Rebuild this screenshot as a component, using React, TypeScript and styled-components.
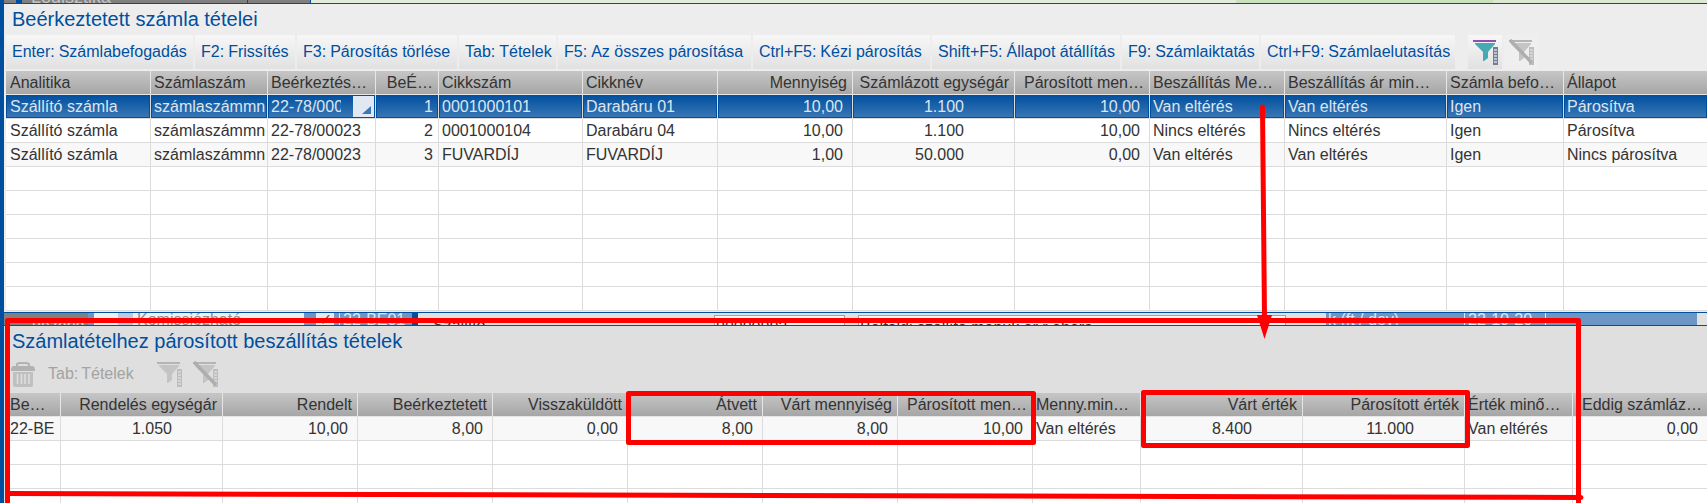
import React from 'react';
import styled, { createGlobalStyle, css } from 'styled-components';

const BLUE = '#004f9f';

const GlobalStyle = createGlobalStyle`
  *, *::before, *::after { box-sizing: border-box; }
  body {
    margin: 0;
    font: 16px/22px "Liberation Sans", Arial, sans-serif;
    color: #333;
    background: #ececec;
  }
`;

const Page = styled.main`
  position: relative;
  height: 100vh;
  overflow: hidden;
  border-left: 4px solid ${BLUE};
`;

const TopStrip = styled.div`
  display: flex;
  height: 3px;
  background: #dfead8;
`;

const Fill = styled.span<{ $w?: number; $c: string }>`
  flex: ${p => (p.$w ? `0 0 ${p.$w}px` : '1 1 0')};
  background: ${p => p.$c};
  white-space: nowrap;
  overflow: hidden;
`;

const TopText = styled(Fill)`
  padding-left: 9px;
  color: #c4c4c4;
  font-size: 18px;
  line-height: 12px;
  display: flex;
  align-items: flex-end;
`;

const Panel = styled.section<{ $muted?: boolean }>`
  border-top: 1px solid ${BLUE};
  background: ${p => (p.$muted ? '#dfdfdf' : '#ededed')};
  padding-left: 2px;
`;

const Title = styled.h2`
  margin: 0;
  padding: 0 6px;
  font-size: 20px;
  font-weight: 400;
  line-height: 31px;
  color: ${BLUE};
`;

const Toolbar = styled.div`
  display: flex;
  align-items: stretch;
  gap: 2px;
  height: 34px;
  margin-bottom: 2px;
`;

const ToolButton = styled.button<{ $w?: number; $plain?: boolean }>`
  display: flex;
  align-items: center;
  gap: 4px;
  flex: none;
  width: ${p => (p.$w ? `${p.$w}px` : 'auto')};
  padding: 0 6px;
  border: 0;
  font: inherit;
  color: ${BLUE};
  white-space: nowrap;
  background: linear-gradient(#f7f7f7, #e1e1e1);
  ${p => p.$plain && css`
    gap: 3px;
    background: none;
    color: #a3a3a3;
  `}
`;

const IconButton = styled.button<{ $tone: 'raised' | 'faint' | 'plain' }>`
  display: grid;
  place-items: center;
  flex: none;
  width: 34px;
  padding: 0;
  border: 0;
  background: ${p =>
    p.$tone === 'raised' ? 'linear-gradient(#f7f7f7, #e1e1e1)' : p.$tone === 'faint' ? '#efefef' : 'none'};
`;

const Spacer = styled.span<{ $w: number }>`
  flex: 0 0 ${p => p.$w}px;
`;

const Grid = styled.table`
  width: 100%;
  table-layout: fixed;
  border-collapse: separate;
  border-spacing: 0;
  background: #fff;
`;

const cell = css<{ $align?: Align }>`
  height: 24px;
  border-right: 1px solid #dcdcdc;
  border-bottom: 1px solid #dcdcdc;
  line-height: 23px;
  font-weight: 400;
  white-space: nowrap;
  overflow: hidden;
  text-align: ${p => (p.$align && p.$align !== 'left' ? 'right' : 'left')};
  &:last-child { border-right: 0; }
`;

const HeadCell = styled.th<{ $align?: Align }>`
  ${cell}
  padding: 0 5px 0 3px;
  border-color: #e6e6e6;
  background: linear-gradient(#c6c6c6, #a6a6a6);
  &:first-child { padding-left: 4px; }
`;

const endPadding = { left: 0, tight: 5, right: 9, price: 50 };

const Cell = styled.td<{ $align?: Align }>`
  ${cell}
  padding: 0 ${p => endPadding[p.$align ?? 'left']}px 0 3px;
  &:first-child { padding-left: 4px; }
`;

const Row = styled.tr<{ $kind: 'plain' | 'shaded' | 'selected' }>`
  ${p => p.$kind === 'shaded' && css`background: #f8f8f8;`}
  ${p => p.$kind === 'selected' && css`
    color: #dfe5ee;
    ${Cell} {
      background: linear-gradient(#004f9f, #3b78b6) padding-box;
      box-shadow: inset 0 0 0 1px ${BLUE};
    }
  `}
`;

const Clip = styled.div`
  margin-right: 2px;
  overflow: hidden;
`;

const Lookup = styled.div`
  display: flex;
  justify-content: space-between;
  align-items: center;
  padding-right: 1px;
`;

const LookupText = styled.span`
  width: 70px;
  overflow: hidden;
`;

const LookupButton = styled.button`
  width: 21px;
  height: 21px;
  padding: 6px 0 0 5px;
  border: 0;
  background: #e1e8f4;
  display: grid;
  place-items: center;
`;

const Behind = styled.div`
  display: flex;
  height: 13px;
  border-top: 1px solid ${BLUE};
  background: #e1e1e1;
  overflow: hidden;
`;

const Piece = styled.span<{ $w: number; $bg?: string; $fg?: string; $drop?: number; $pad?: number; $box?: boolean }>`
  flex: 0 0 ${p => p.$w}px;
  height: 24px;
  padding: ${p => p.$drop ?? 0}px 0 0 ${p => p.$pad ?? 0}px;
  line-height: 14px;
  white-space: nowrap;
  background: ${p => p.$bg ?? 'transparent'};
  color: ${p => p.$fg ?? '#333'};
  ${p => p.$box && css`
    margin-top: 2px;
    border: 1px solid #a0a0a0;
    background: #f6f6f6;
  `}
`;

const Marks = styled.svg`
  position: absolute;
  top: 0;
  left: -4px;
  width: 1707px;
  height: 503px;
  pointer-events: none;
`;

type Align = 'left' | 'right' | 'price' | 'tight';
type Column = { label: string; w?: number; align?: Align; clip?: boolean };

const invoiceColumns: Column[] = [
  { label: 'Analitika', w: 145 },
  { label: 'Számlaszám', w: 117, clip: true },
  { label: 'Beérkeztés…', w: 108 },
  { label: 'BeÉ…', w: 63, align: 'tight' },
  { label: 'Cikkszám', w: 144 },
  { label: 'Cikknév', w: 135 },
  { label: 'Mennyiség', w: 135, align: 'right' },
  { label: 'Számlázott egységár', w: 162, align: 'price' },
  { label: 'Párosított men…', w: 135, align: 'right' },
  { label: 'Beszállítás Me…', w: 135 },
  { label: 'Beszállítás ár min…', w: 162 },
  { label: 'Számla befo…', w: 117 },
  { label: 'Állapot' },
];

const invoiceRows = [
  ['Szállító számla', 'számlaszámmn', '22-78/00023', '1', '0001000101', 'Darabáru 01', '10,00', '1.100', '10,00', 'Van eltérés', 'Van eltérés', 'Igen', 'Párosítva'],
  ['Szállító számla', 'számlaszámmn', '22-78/00023', '2', '0001000104', 'Darabáru 04', '10,00', '1.100', '10,00', 'Nincs eltérés', 'Nincs eltérés', 'Igen', 'Párosítva'],
  ['Szállító számla', 'számlaszámmn', '22-78/00023', '3', 'FUVARDÍJ', 'FUVARDÍJ', '1,00', '50.000', '0,00', 'Van eltérés', 'Van eltérés', 'Igen', 'Nincs párosítva'],
];

const deliveryColumns: Column[] = [
  { label: 'Be…', w: 55, clip: true },
  { label: 'Rendelés egységár', w: 162, align: 'price' },
  { label: 'Rendelt', w: 135, align: 'right' },
  { label: 'Beérkeztetett', w: 135, align: 'right' },
  { label: 'Visszaküldött', w: 135, align: 'right' },
  { label: 'Átvett', w: 135, align: 'right' },
  { label: 'Várt mennyiség', w: 135, align: 'right' },
  { label: 'Párosított men…', w: 135, align: 'right' },
  { label: 'Menny.min…', w: 108 },
  { label: 'Várt érték', w: 162, align: 'price' },
  { label: 'Párosított érték', w: 162, align: 'price' },
  { label: 'Érték minő…', w: 108 },
  { label: 'Eddig számláz…', align: 'right' },
];

const deliveryRows = [
  ['22-BE', '1.050', '10,00', '8,00', '0,00', '8,00', '8,00', '10,00', 'Van eltérés', '8.400', '11.000', 'Van eltérés', '0,00'],
];

const actions: { keys: string; label: string; w: number }[] = [
  { keys: 'Enter:', label: 'Számlabefogadás', w: 187 },
  { keys: 'F2:', label: 'Frissítés', w: 100 },
  { keys: 'F3:', label: 'Párosítás törlése', w: 160 },
  { keys: 'Tab:', label: 'Tételek', w: 97 },
  { keys: 'F5:', label: 'Az összes párosítása', w: 193 },
  { keys: 'Ctrl+F5:', label: 'Kézi párosítás', w: 177 },
  { keys: 'Shift+F5:', label: 'Állapot átállítás', w: 188 },
  { keys: 'F9:', label: 'Számlaiktatás', w: 137 },
  { keys: 'Ctrl+F9:', label: 'Számlaelutasítás', w: 194 },
];

function FilterIcon({ active, off }: { active?: boolean; off?: boolean }) {
  return (
    <svg width="26" height="26" viewBox="0 0 26 26" aria-hidden="true">
      <path d="M3 4h20v1l-7 8v6l-4 3h-1v-9L3 5z" fill={active ? '#47a9b1' : '#c4c4c4'} />
      <rect x="1" y="1" width="23" height="2" fill={active ? '#8f4fb5' : '#b4b4b4'} />
      <rect x="21" y="8" width="5" height="18" fill={active ? '#7c7c7c' : '#bdbdbd'} />
      <path d="M22 11h3M22 14h3M22 17h3M22 20h3M22 23h3" stroke={active ? '#c9dcff' : '#dcdcdc'} strokeWidth="1.4" />
      {off && <path d="M2 1l22 23" stroke="#aeaeae" strokeWidth="3.4" />}
    </svg>
  );
}

function TrashIcon() {
  return (
    <svg width="24" height="25" viewBox="0 0 24 25" aria-hidden="true">
      <path d="M6 4V2l2-1h8l2 1v2" fill="none" stroke="#b2b2b2" strokeWidth="2" />
      <path d="M0 8q0-4 3-4h18q3 0 3 4v1H0z" fill="#b2b2b2" />
      <path d="M2 10h20v13q0 2-2 2H4q-2 0-2-2z" fill="#c0c0c0" />
      <path d="M6.500 12v10M10.500 12v10M14 12v10M18 12v10" stroke="#dfdfdf" strokeWidth="1.500" />
    </svg>
  );
}

function DataGrid({ columns, rows, blanks, selected }: {
  columns: Column[]; rows: string[][]; blanks: number; selected?: number;
}) {
  return (
    <Grid>
      <colgroup>
        {columns.map((c, i) => <col key={i} width={c.w} />)}
      </colgroup>
      <thead>
        <tr>{columns.map((c, i) => <HeadCell key={i} $align={c.align} scope="col">{c.label}</HeadCell>)}</tr>
      </thead>
      <tbody>
        {rows.map((r, ri) => (
          <Row key={ri} $kind={ri === selected ? 'selected' : ri % 2 === 0 ? 'shaded' : 'plain'}>
            {r.map((v, ci) => (
              <Cell key={ci} $align={columns[ci].align}>
                {ri === selected && ci === 2 ? (
                  <Lookup>
                    <LookupText>{v}</LookupText>
                    <LookupButton aria-label="Beérkeztetés megnyitása">
                      <svg width="9" height="8" viewBox="0 0 9 8" aria-hidden="true">
                        <path d="M9 0v8H0z" fill="#3b78b6" />
                      </svg>
                    </LookupButton>
                  </Lookup>
                ) : columns[ci].clip ? <Clip>{v}</Clip> : v}
              </Cell>
            ))}
          </Row>
        ))}
        {Array.from({ length: blanks }, (_, i) => (
          <Row key={`b${i}`} $kind="plain">
            {columns.map((_c, ci) => <Cell key={ci} />)}
          </Row>
        ))}
      </tbody>
    </Grid>
  );
}

const PanelEnd = styled.div`
  height: 1px;
`;

export default function App() {
  return (
    <Page>
      <GlobalStyle />
      <TopStrip>
        <Fill $w={12} $c="#808080" />
        <Fill $w={6} $c={BLUE} />
        <TopText $w={225} $c="#808080">Logisztika</TopText>
        <Fill $w={1} $c={BLUE} />
        <Fill $w={62} $c="#808080" />
        <Fill $w={1} $c={BLUE} />
        <Fill $w={925} $c="#e2ecdb" />
        <Fill $w={257} $c="#c9e2bd" />
        <Fill $c="#dbe9d3" />
      </TopStrip>
      <Panel>
        <Title>Beérkeztetett számla tételei</Title>
        <Toolbar>
          {actions.map(a => (
            <ToolButton key={a.keys} $w={a.w}><span>{a.keys}</span><span>{a.label}</span></ToolButton>
          ))}
          <Spacer $w={9} />
          <IconButton $tone="raised" aria-label="Szűrés"><FilterIcon active /></IconButton>
          <IconButton $tone="faint" aria-label="Szűrés törlése"><FilterIcon off /></IconButton>
        </Toolbar>
        <DataGrid columns={invoiceColumns} rows={invoiceRows} blanks={6} selected={0} />
        <PanelEnd />
      </Panel>
      <Behind>
        <Piece $w={84} $bg="#808080" $fg="#ddd" $drop={6} $pad={27}>Vezérlő</Piece>
        <Piece $w={6} $bg="#6a97c6" />
        <Piece $w={24} $bg="#efefef" />
        <Piece $w={15} $bg="#b7cbe3" />
        <Piece $w={171} $bg="#efefef" $fg="#8c8c8c" $pad={4}>Komissiózható</Piece>
        <Piece $w={12} $bg="#6a97c6" />
        <Piece $w={18} $bg="#e9e9e9" $fg="#555" $pad={3}>✓</Piece>
        <Piece $w={5} $bg="#6a97c6" />
        <Piece $w={1} $bg="#dfe8f2" />
        <Piece $w={72} $bg="#6a97c6" $fg="#dfe8f2" $pad={3}>22-BE01</Piece>
        <Piece $w={6} $bg={BLUE} />
        <Piece $w={296} $drop={6} $pad={15}>Szállító</Piece>
        <Piece $w={131} $box $drop={5} $pad={1}>00000002</Piece>
        <Piece $w={13} />
        <Piece $w={428} $box $drop={5} $pad={1}>Belföldi szállító menük ár r ébéra</Piece>
        <Piece $w={40} />
        <Piece $w={138} $bg="#6a97c6" $fg="#dfe8f2" $pad={2}>k (ft / dev)</Piece>
        <Piece $w={1} $bg="#dfe8f2" />
        <Piece $w={80} $bg="#6a97c6" $fg="#dfe8f2" $pad={3}>22-10-20</Piece>
        <Piece $w={1} $bg="#dfe8f2" />
        <Piece $w={151} $bg="#6a97c6" />
      </Behind>
      <Panel $muted>
        <Title>Számlatételhez párosított beszállítás tételek</Title>
        <Toolbar>
          <IconButton $tone="plain" aria-label="Törlés" disabled><TrashIcon /></IconButton>
          <ToolButton $plain disabled><span>Tab:</span><span>Tételek</span></ToolButton>
          <Spacer $w={8} />
          <IconButton $tone="plain" aria-label="Szűrés" disabled><FilterIcon /></IconButton>
          <IconButton $tone="plain" aria-label="Szűrés törlése" disabled><FilterIcon off /></IconButton>
        </Toolbar>
        <DataGrid columns={deliveryColumns} rows={deliveryRows} blanks={3} />
      </Panel>
      <Marks viewBox="0 0 1707 503" aria-hidden="true" fill="none" stroke="#f00" strokeWidth="5">
        <path d="M7.500 503V320.500H1578.500V503" strokeLinejoin="round" />
        <path d="M8 493.500L1581 497.500" strokeLinecap="round" />
        <rect x="628.500" y="393.500" width="405" height="49" strokeLinejoin="round" />
        <rect x="1143.500" y="392.500" width="324" height="53" strokeLinejoin="round" />
        <path d="M1262.500 107L1264.500 318" strokeLinecap="round" />
        <path d="M1257 315h15l-7.500 24z" fill="#f00" stroke="none" />
      </Marks>
    </Page>
  );
}
